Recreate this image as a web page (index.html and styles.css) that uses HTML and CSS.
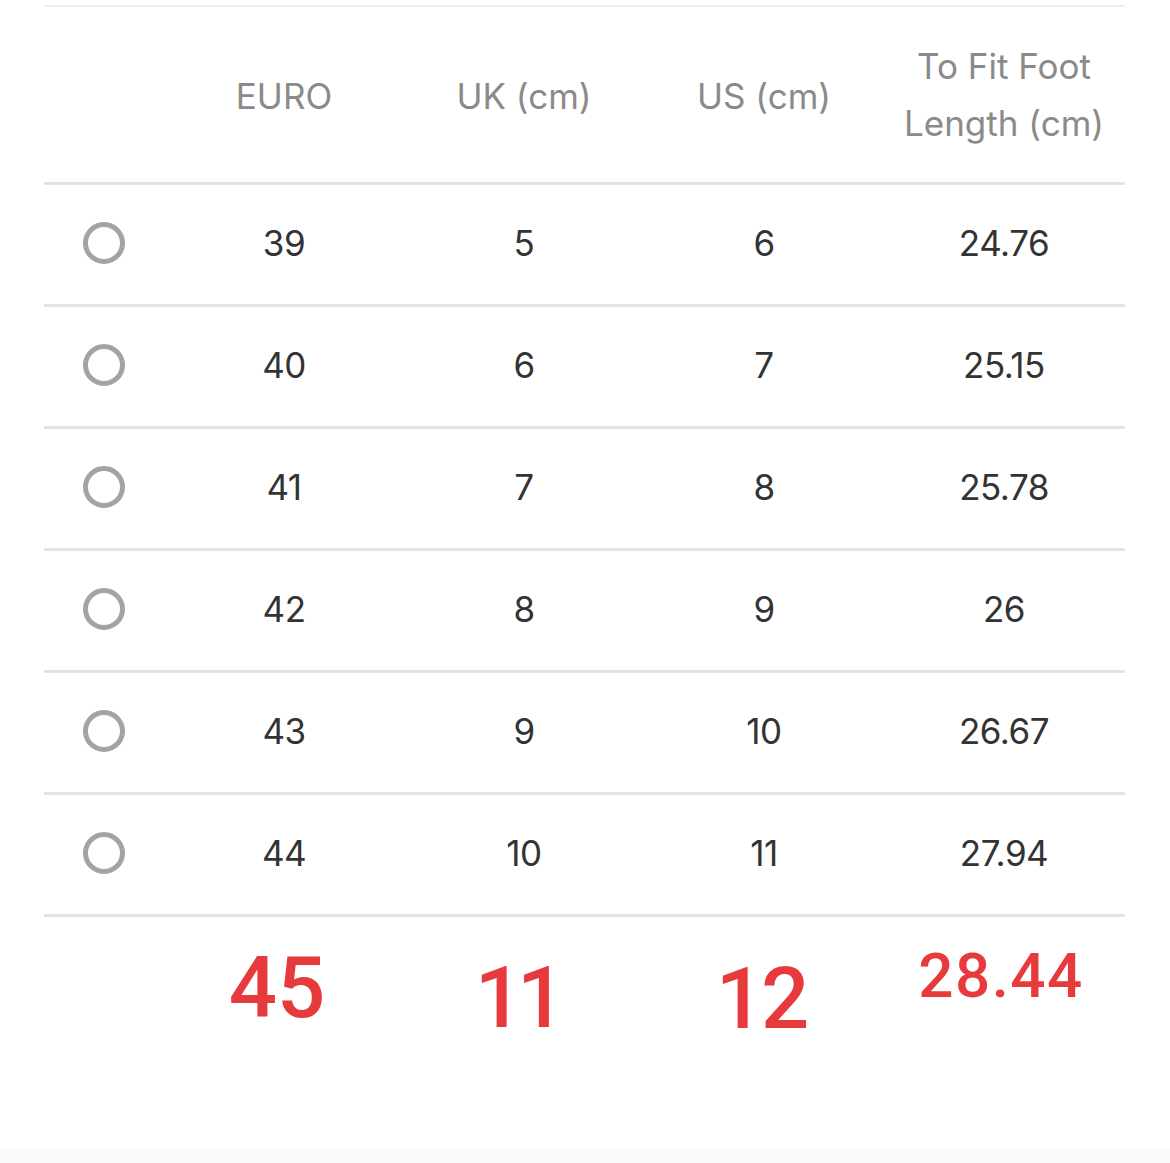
FILE: index.html
```html
<!DOCTYPE html>
<html>
<head>
<meta charset="utf-8">
<link rel="stylesheet" href="styles.css">
</head>
<body>
<div class="page">
  <div class="table">
    <div class="row head">
      <div class="cell"></div>
      <div class="cell one">EURO</div>
      <div class="cell one">UK (cm)</div>
      <div class="cell one">US (cm)</div>
      <div class="cell">To Fit Foot<br>Length (cm)</div>
    </div>
    <div class="row">
      <div class="cell"><span class="radio"></span></div>
      <div class="cell">39</div><div class="cell">5</div><div class="cell">6</div><div class="cell">24.76</div>
    </div>
    <div class="row">
      <div class="cell"><span class="radio"></span></div>
      <div class="cell">40</div><div class="cell">6</div><div class="cell">7</div><div class="cell">25.15</div>
    </div>
    <div class="row">
      <div class="cell"><span class="radio"></span></div>
      <div class="cell">41</div><div class="cell">7</div><div class="cell">8</div><div class="cell">25.78</div>
    </div>
    <div class="row">
      <div class="cell"><span class="radio"></span></div>
      <div class="cell">42</div><div class="cell">8</div><div class="cell">9</div><div class="cell">26</div>
    </div>
    <div class="row">
      <div class="cell"><span class="radio"></span></div>
      <div class="cell">43</div><div class="cell">9</div><div class="cell">10</div><div class="cell">26.67</div>
    </div>
    <div class="row">
      <div class="cell"><span class="radio"></span></div>
      <div class="cell">44</div><div class="cell">10</div><div class="cell">11</div><div class="cell">27.94</div>
    </div>
    <div class="extra">
      <div class="ecell"></div>
      <div class="ecell"><span class="big b45">45</span></div>
      <div class="ecell"><span class="big b11">11</span></div>
      <div class="ecell"><span class="big b12">12</span></div>
      <div class="ecell"><span class="big small b28">28.44</span></div>
    </div>
  </div>
</div>
<div class="band"></div>
</body>
</html>
```

FILE: styles.css
```css
html, body {
  margin: 0;
  padding: 0;
  background: #ffffff;
}
.page {
  height: 1149px;
  padding-top: 5px;
  box-sizing: border-box;
  overflow: hidden;
}
.table {
  margin-left: 44px;
  width: 1081px;
  border-top: 2px solid #efefef;
}
.row {
  display: grid;
  grid-template-columns: 120px repeat(4, 240px);
  height: 119px;
  border-bottom: 3px solid #e3e3e3;
  align-items: center;
}
.row.head {
  height: 175px;
}
.cell {
  display: flex;
  justify-content: center;
  align-items: center;
  text-align: center;
  font-family: Inter, Lato, sans-serif;
  font-size: 35px;
  letter-spacing: -0.5px;
  color: #333333;
  padding-bottom: 3px;
}
.head .cell {
  font-size: 35px;
  line-height: 57px;
  letter-spacing: 0;
  color: #8a8a8a;
  padding-bottom: 0;
}
.head .cell.one {
  padding-top: 4px;
}
.radio {
  display: block;
  width: 32px;
  height: 32px;
  border: 5px solid #a3a3a3;
  border-radius: 50%;
}
.extra {
  display: grid;
  grid-template-columns: 120px repeat(4, 240px);
  align-items: start;
}
.ecell {
  display: flex;
  justify-content: center;
}
.big {
  font-family: Roboto, "Liberation Sans", sans-serif;
  font-weight: 500;
  font-size: 85px;
  line-height: 1;
  color: #e63a3d;
}
.big.small {
  font-size: 62px;
  letter-spacing: 1.5px;
}
.b45 { margin-top: 29px; margin-right: 14px; }
.b11 { margin-top: 39px; margin-right: 14px; letter-spacing: -6px; }
.b12 { margin-top: 40px; margin-right: 6px; letter-spacing: -3px; }
.b28 { margin-top: 28px; margin-right: 6px; }
.band {
  height: 14px;
  background: #f9f9f9;
}
```
